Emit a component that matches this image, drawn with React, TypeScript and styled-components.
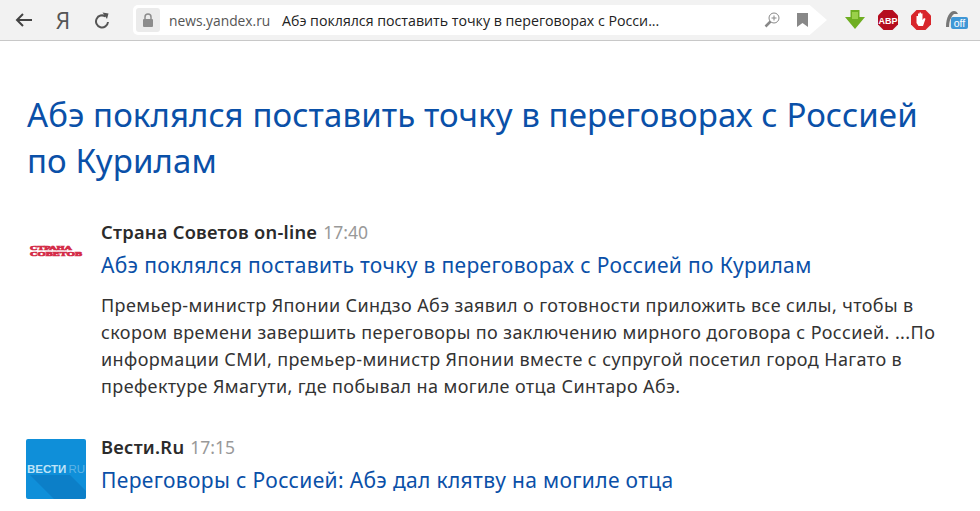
import React from "react";
import styled, { createGlobalStyle } from "styled-components";

const Global = createGlobalStyle`
  html, body { margin: 0; padding: 0; background: #fff; overflow: hidden; }
  body { font-family: "Noto Sans", "Open Sans", sans-serif; }
`;

const Page = styled.div`
  width: 980px;
  height: 511px;
  overflow: hidden;
  display: flex;
  flex-direction: column;
`;

const Toolbar = styled.header`
  height: 41px;
  flex: none;
  box-sizing: border-box;
  border-bottom: 1px solid #c8c8c8;
  background: #f2f2f2;
  display: flex;
  align-items: center;
`;

const NavIcon = styled.div<{ $w: number }>`
  width: ${(p) => p.$w}px;
  height: 24px;
  flex: none;
  display: flex;
  align-items: center;
  justify-content: center;
`;

const YaGlyph = styled.span`
  font-family: "Open Sans", sans-serif;
  font-size: 23px;
  color: #555;
  line-height: 24px;
`;

const Omnibox = styled.div`
  margin-left: 7px;
  width: 694px;
  height: 30px;
  background: #fff;
  display: flex;
  align-items: center;
  border-radius: 5px 0 0 5px;
  clip-path: polygon(0 0, 97.5% 0, 100% 50%, 97.5% 100%, 0 100%);
  font-family: "Open Sans", sans-serif;
`;

const LockBox = styled.div`
  width: 24px;
  height: 24px;
  margin-left: 3px;
  border-radius: 3px;
  background: #ebebeb;
  display: flex;
  align-items: center;
  justify-content: center;
  flex: none;
`;

const Host = styled.span`
  margin-left: 9px;
  font-size: 13.8px;
  color: #555;
  width: 113px;
  flex: none;
  white-space: nowrap;
`;

const TabTitle = styled.span`
  font-size: 14.2px;
  color: #222;
  white-space: nowrap;
  flex: 1;
`;

const OmniIcon = styled.div<{ $mr: number }>`
  margin-right: ${(p) => p.$mr}px;
  display: flex;
  flex: none;
`;

const Extensions = styled.div`
  margin-left: 17px;
  display: flex;
  align-items: center;
  gap: 11px;
`;

const Content = styled.main`
  padding: 51px 0 0 27px;
  flex: 1;
`;

const Title = styled.h1`
  margin: 0 0 36px;
  font-size: 33px;
  line-height: 46px;
  font-weight: 400;
  color: #0a50a8;
  width: 920px;
  letter-spacing: 0.1px;
`;

const Story = styled.article`
  display: flex;
  margin-bottom: 35px;
`;

const LogoCol = styled.div`
  width: 75px;
  flex: none;
  margin-left: -1px;
`;

const Strana = styled.div`
  margin-top: 22px;
  width: 60px;
  height: 18px;
`;

const Vesti = styled.div`
  margin-top: 4px;
  width: 60px;
  height: 60px;
  border-radius: 2px;
  overflow: hidden;
`;

const Body = styled.div`
  width: 850px;
`;

const Meta = styled.div`
  display: flex;
  align-items: baseline;
  gap: 6px;
  height: 24px;
  line-height: 24px;
  margin-bottom: 5px;
`;

const Source = styled.span`
  font-size: 18.3px;
  font-weight: 600;
  color: #2b2b2b;
  letter-spacing: 0.26px;
`;

const Time = styled.span`
  font-size: 17.5px;
  color: #999;
`;

const Headline = styled.a`
  display: block;
  font-size: 21px;
  line-height: 32px;
  color: #0a50a8;
  white-space: nowrap;
  letter-spacing: 0.34px;
`;

const Text = styled.p`
  margin: 11px 0 0;
  font-size: 18px;
  line-height: 27px;
  color: #333;
  letter-spacing: 0.39px;
`;

const Line = styled.span`
  display: block;
  white-space: nowrap;
`;

export default function App() {
  return (
    <Page>
      <Global />
      <Toolbar>
        <NavIcon $w={48}>
          <svg width="18" height="14" viewBox="0 0 18 14" fill="none" stroke="#444" strokeWidth="2">
            <path d="M17 7H2M8 1 2 7l6 6" />
          </svg>
        </NavIcon>
        <NavIcon $w={30}><YaGlyph>Я</YaGlyph></NavIcon>
        <NavIcon $w={48}>
          <svg width="16" height="17" viewBox="0 0 16 17" fill="none">
            <path d="M11.500 4.500A6 6 0 1 0 14 10" stroke="#555" strokeWidth="2" />
            <path d="M8.500 0.500 14.500 1.500 13 7z" fill="#555" />
          </svg>
        </NavIcon>
        <Omnibox>
          <LockBox>
            <svg width="12" height="14" viewBox="0 0 12 14">
              <path d="M3 6V4a3 3 0 0 1 6 0v2" fill="none" stroke="#8c8c8c" strokeWidth="1.500" />
              <rect x="1" y="6" width="10" height="8" rx="1" fill="#8c8c8c" />
            </svg>
          </LockBox>
          <Host>news.yandex.ru</Host>
          <TabTitle>Абэ поклялся поставить точку в переговорах с Росси...</TabTitle>
          <OmniIcon $mr={17}>
            <svg width="16" height="16" viewBox="0 0 16 16" fill="none" stroke="#888" strokeWidth="1">
              <circle cx="10" cy="6" r="5" />
              <path d="M10 3.500v5M7.500 6h5" />
              <path d="M6.500 9.500 1.500 14.500" strokeWidth="2.500" />
            </svg>
          </OmniIcon>
          <OmniIcon $mr={19}>
            <svg width="11" height="14" viewBox="0 0 11 14"><path d="M0 0h11v14L5.500 10 0 14z" fill="#888" /></svg>
          </OmniIcon>
        </Omnibox>
        <Extensions>
          <svg width="22" height="22" viewBox="0 0 22 22">
            <path d="M6.500 1h9v7H21L11 20 1 8h5.500z" fill="#6fae22" />
            <path d="M8 3h6v7h-6z" fill="#9ad04a" />
          </svg>
          <svg width="22" height="22" viewBox="0 0 22 22">
            <path d="M6.500 1h9L21 6.500v9L15.500 21h-9L1 15.500v-9z" fill="#b50d1e" />
            <text x="11" y="14.500" fontSize="9" fontWeight="700" fill="#fff" textAnchor="middle" fontFamily="Liberation Sans">ABP</text>
          </svg>
          <svg width="22" height="22" viewBox="0 0 22 22">
            <path d="M6.500 1h9L21 6.500v9L15.500 21h-9L1 15.500v-9z" fill="#d8262b" />
            <path d="M6.500 11V7h1.500v3V4.500h1.500V10V3.500H11V10V4.500h1.500V11l1.500-2 1.500.7-2.500 7.300H8.500L6.500 14z" fill="#fff" />
          </svg>
          <svg width="25" height="24" viewBox="0 0 25 24">
            <path d="M3 19C3 9 7 3 11 3c2 0 3 1 4 3l-4 0C8 8 7 13 7 19z" fill="#777" />
            <path d="M6 19c0-5 1-9 4-10v10z" fill="#e4e4e4" />
            <rect x="8" y="9" width="17" height="12" rx="2" fill="#3f97d6" />
            <text x="16.500" y="18.500" fontSize="10.500" fill="#fff" textAnchor="middle" fontFamily="Liberation Sans">off</text>
          </svg>
        </Extensions>
      </Toolbar>
      <Content>
        <Title>Абэ поклялся поставить точку в переговорах с Россией<br />по Курилам</Title>
        <Story>
          <LogoCol>
            <Strana>
              <svg width="60" height="18" viewBox="0 0 60 18">
                <g transform="scale(1 .8)">
                  <text x="4" y="9.500" fontSize="8" fontWeight="700" fill="#d42c48" textLength="42" lengthAdjust="spacingAndGlyphs" fontFamily="Liberation Serif" stroke="#d42c48" strokeWidth=".9">СТРАНА</text>
                  <text x="4" y="17.500" fontSize="8" fontWeight="700" fill="#d42c48" textLength="52" lengthAdjust="spacingAndGlyphs" fontFamily="Liberation Serif" stroke="#d42c48" strokeWidth=".9">СОВЕТОВ</text>
                </g>
              </svg>
            </Strana>
          </LogoCol>
          <Body>
            <Meta><Source>Страна Советов on-line</Source><Time>17:40</Time></Meta>
            <Headline>Абэ поклялся поставить точку в переговорах с Россией по Курилам</Headline>
            <Text>
              <Line>Премьер-министр Японии Синдзо Абэ заявил о готовности приложить все силы, чтобы в</Line>
              <Line>скором времени завершить переговоры по заключению мирного договора с Россией. ...По</Line>
              <Line>информации СМИ, премьер-министр Японии вместе с супругой посетил город Нагато в</Line>
              <Line>префектуре Ямагути, где побывал на могиле отца Синтаро Абэ.</Line>
            </Text>
          </Body>
        </Story>
        <Story>
          <LogoCol>
            <Vesti>
              <svg width="60" height="60" viewBox="0 0 60 60">
                <rect width="60" height="60" fill="#0f8fd9" />
                <path d="M4 36h40L60 52v8H28z" fill="#0c7fc8" />
                <text x="1" y="34" fontSize="11.500" fontWeight="700" fill="#bfe3f7" fontFamily="Liberation Sans">ВЕСТИ</text>
                <text x="42.500" y="34" fontSize="11.500" fill="#5fb4e6" fontFamily="Liberation Sans">RU</text>
              </svg>
            </Vesti>
          </LogoCol>
          <Body>
            <Meta><Source>Вести.Ru</Source><Time>17:15</Time></Meta>
            <Headline>Переговоры с Россией: Абэ дал клятву на могиле отца</Headline>
          </Body>
        </Story>
      </Content>
    </Page>
  );
}
